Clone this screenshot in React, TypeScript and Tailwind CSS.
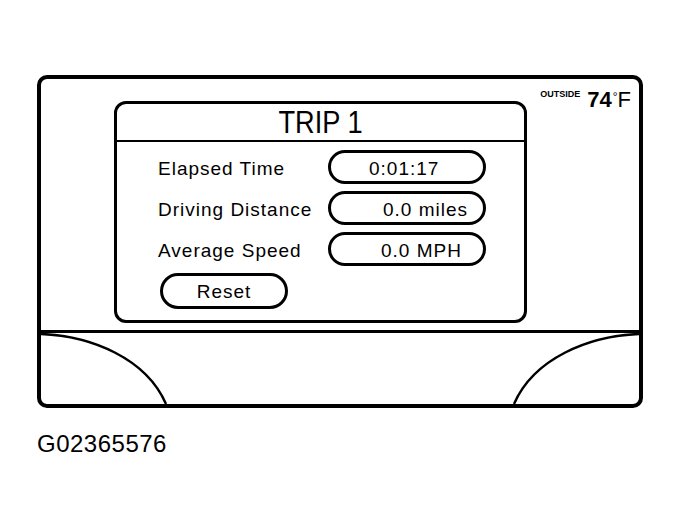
const rows = [
    { label: "Elapsed Time", value: "0:01:17", pad: "pl-[38px]" },
    { label: "Driving Distance", value: "0.0 miles", pad: "pl-[52px]" },
    { label: "Average Speed", value: "0.0 MPH", pad: "pl-[50px]" },
];

const Curves = () => (
    <svg width="598" height="71" viewBox="0 0 598 71" className="block">
        <path d="M0 1 C 50 3, 105 25, 125 71" fill="none" stroke="black" strokeWidth="2.5" />
        <path d="M598 1 C 548 3, 493 25, 473 71" fill="none" stroke="black" strokeWidth="2.5" />
    </svg>
);

export default function App() {
    return (
        <div className="w-[680px] h-[528px] bg-white text-black font-['Liberation_Sans',Arial,sans-serif] pl-[37px] pt-[75px]">
            <div className="w-[606px] h-[333px] border-4 border-black rounded-[10px] flex flex-col overflow-hidden">
                {/* screen */}
                <div className="h-[251px] flex">
                    <div className="ml-[73px] mt-[22px] w-[413px] h-[222px] border-[3px] border-black rounded-[12px] flex flex-col">
                        <div className="h-[38px] border-b-2 border-black flex items-center justify-center">
                            <span className="inline-block text-[32px] leading-none scale-x-[0.85]">TRIP 1</span>
                        </div>
                        <div className="flex flex-col gap-[7px] pt-[8px] pl-[41px]">
                            {rows.map((row, i) => (
                                <div key={i} className="flex items-center h-[34px]">
                                    <span className="w-[170px] text-[19px] leading-none tracking-[1px] pt-[2px]">{row.label}</span>
                                    <div className={"w-[158px] h-[34px] border-[3px] border-black rounded-full flex items-center text-[19px] leading-none tracking-[1px] pt-[2px] " + row.pad}>
                                        {row.value}
                                    </div>
                                </div>
                            ))}
                            <button className="ml-[2px] w-[128px] h-[36px] border-[3px] border-black rounded-full flex items-center justify-center text-[19px] leading-none tracking-[1px]">
                                Reset
                            </button>
                        </div>
                    </div>
                    <div className="flex-1 flex justify-end items-start pt-[10px] pr-[8px]">
                        <span className="text-[9px] font-bold leading-none mr-[7px] mt-[1px]">OUTSIDE</span>
                        <span className="text-[22px] font-bold leading-none">74</span>
                        <span className="text-[12px] leading-none mt-[2px] ml-[1px]">°</span>
                        <span className="text-[22px] leading-none">F</span>
                    </div>
                </div>
                <div className="h-[3px] bg-black" />
                <div className="h-[71px]">
                    <Curves />
                </div>
            </div>
            <div className="mt-[24px] text-[24px] leading-[24px] tracking-[0.5px]">G02365576</div>
        </div>
    );
}
